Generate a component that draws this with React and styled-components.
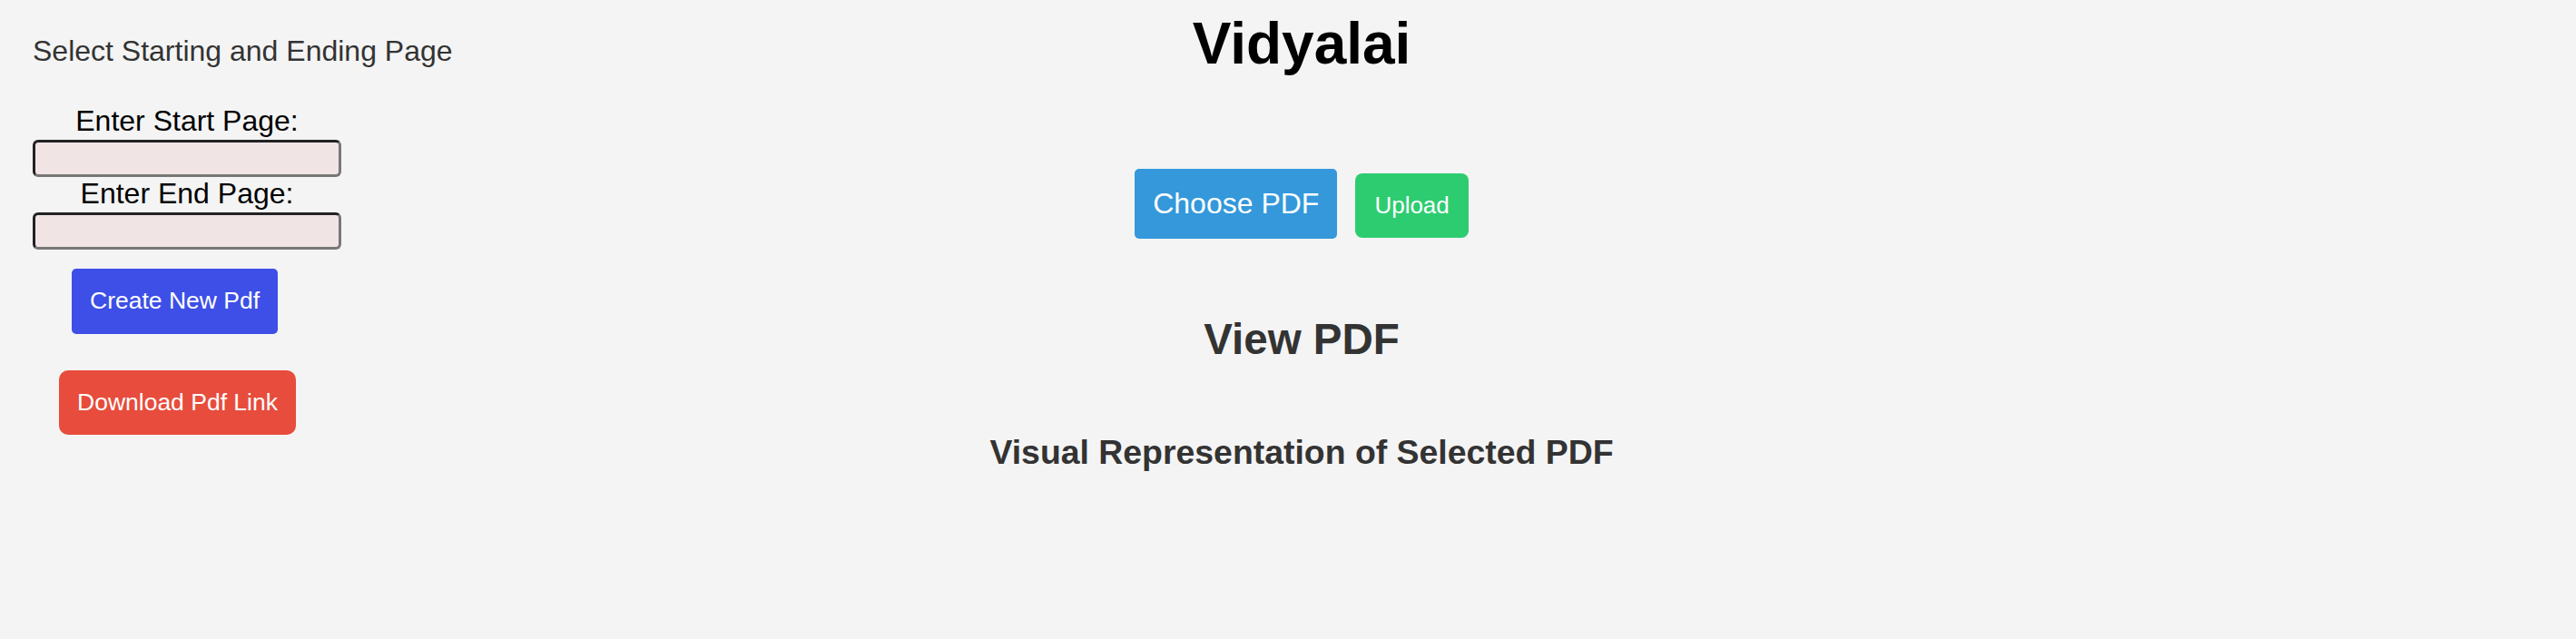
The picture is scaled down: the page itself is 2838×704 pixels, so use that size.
import React, { useState } from "react";
import styled, { createGlobalStyle } from "styled-components";

const GlobalStyle = createGlobalStyle`
  body {
    margin: 0;
    background: #f4f4f4;
    font-family: "Liberation Sans", Arial, sans-serif;
  }
`;

export default function App() {
  const [startPage, setStartPage] = useState("");
  const [endPage, setEndPage] = useState("");

  return (
    <>
      <GlobalStyle />
      <PageWrapper>
        <Sidebar>
          <SideTitle>Select Starting and Ending Page</SideTitle>
          <PageForm>
            <FieldLabel htmlFor="start-page">Enter Start Page:</FieldLabel>
            <PageInput
              id="start-page"
              value={startPage}
              onChange={(e) => setStartPage(e.target.value)}
            />
            <FieldLabel htmlFor="end-page">Enter End Page:</FieldLabel>
            <PageInput
              id="end-page"
              value={endPage}
              onChange={(e) => setEndPage(e.target.value)}
            />
          </PageForm>
          <SideButton $bg="#3d4fe6" $radius={5} $indent={43} $top={21}>
            Create New Pdf
          </SideButton>
          <SideButton $bg="#e74c3c" $radius={10} $indent={29} $top={40}>
            Download Pdf Link
          </SideButton>
        </Sidebar>

        <MainContent>
          <AppTitle>Vidyalai</AppTitle>
          <UploadRow>
            <ChooseButton>Choose PDF</ChooseButton>
            <UploadButton>Upload</UploadButton>
          </UploadRow>
          <ViewTitle>View PDF</ViewTitle>
          <SubTitle>Visual Representation of Selected PDF</SubTitle>
        </MainContent>
      </PageWrapper>
    </>
  );
}

const PageWrapper = styled.div`
  display: grid;
  grid-template-columns: 520px 1fr 490px;
  min-height: 704px;
`;

const Sidebar = styled.aside`
  display: flex;
  flex-direction: column;
  align-items: flex-start;
  padding: 38px 0 0 36px;
`;

const SideTitle = styled.h3`
  margin: 0;
  font-size: 32px;
  line-height: 37px;
  font-weight: 400;
  color: #333;
  white-space: nowrap;
`;

const PageForm = styled.div`
  margin-top: 40px;
  width: 340px;
  display: flex;
  flex-direction: column;
  align-items: center;
`;

const FieldLabel = styled.label`
  font-size: 32px;
  line-height: 37px;
  color: #000;
`;

const PageInput = styled.input`
  box-sizing: border-box;
  width: 340px;
  height: 41px;
  margin: 2px 0 0;
  border: 3px solid;
  border-color: #222 #777 #777 #222;
  border-radius: 6px;
  background: #f0e4e4;
  font-size: 20px;
  font-family: inherit;
  padding: 0 6px;
  outline: none;
`;

const SideButton = styled.button`
  margin-top: ${(p) => p.$top}px;
  margin-left: ${(p) => p.$indent}px;
  padding: 20px 20px;
  border: none;
  border-radius: ${(p) => p.$radius}px;
  background: ${(p) => p.$bg};
  color: #fff;
  font-family: inherit;
  font-size: 26.5px;
  line-height: 31.5px;
  cursor: pointer;
  white-space: nowrap;
`;

const MainContent = styled.main`
  display: flex;
  flex-direction: column;
  align-items: center;
  padding-top: 11px;
`;

const AppTitle = styled.h1`
  margin: 0;
  font-size: 64px;
  line-height: 74px;
  font-weight: 700;
  color: #000;
`;

const UploadRow = styled.div`
  margin-top: 101px;
  display: flex;
  align-items: baseline;
  gap: 20px;
`;

const ChooseButton = styled.button`
  padding: 20px 20px;
  border: none;
  border-radius: 5px;
  background: #3498db;
  color: #fff;
  font-family: inherit;
  font-size: 32px;
  line-height: 37px;
  cursor: pointer;
`;

const UploadButton = styled.button`
  padding: 20px 21px;
  border: none;
  border-radius: 8px;
  background: #2ecc71;
  color: #fff;
  font-family: inherit;
  font-size: 26px;
  line-height: 31px;
  cursor: pointer;
`;

const ViewTitle = styled.h2`
  margin: 84px 0 0;
  font-size: 47.5px;
  line-height: 54px;
  font-weight: 700;
  color: #333;
`;

const SubTitle = styled.h3`
  margin: 76px 0 0;
  font-size: 37.4px;
  line-height: 43px;
  font-weight: 700;
  color: #333;
`;
